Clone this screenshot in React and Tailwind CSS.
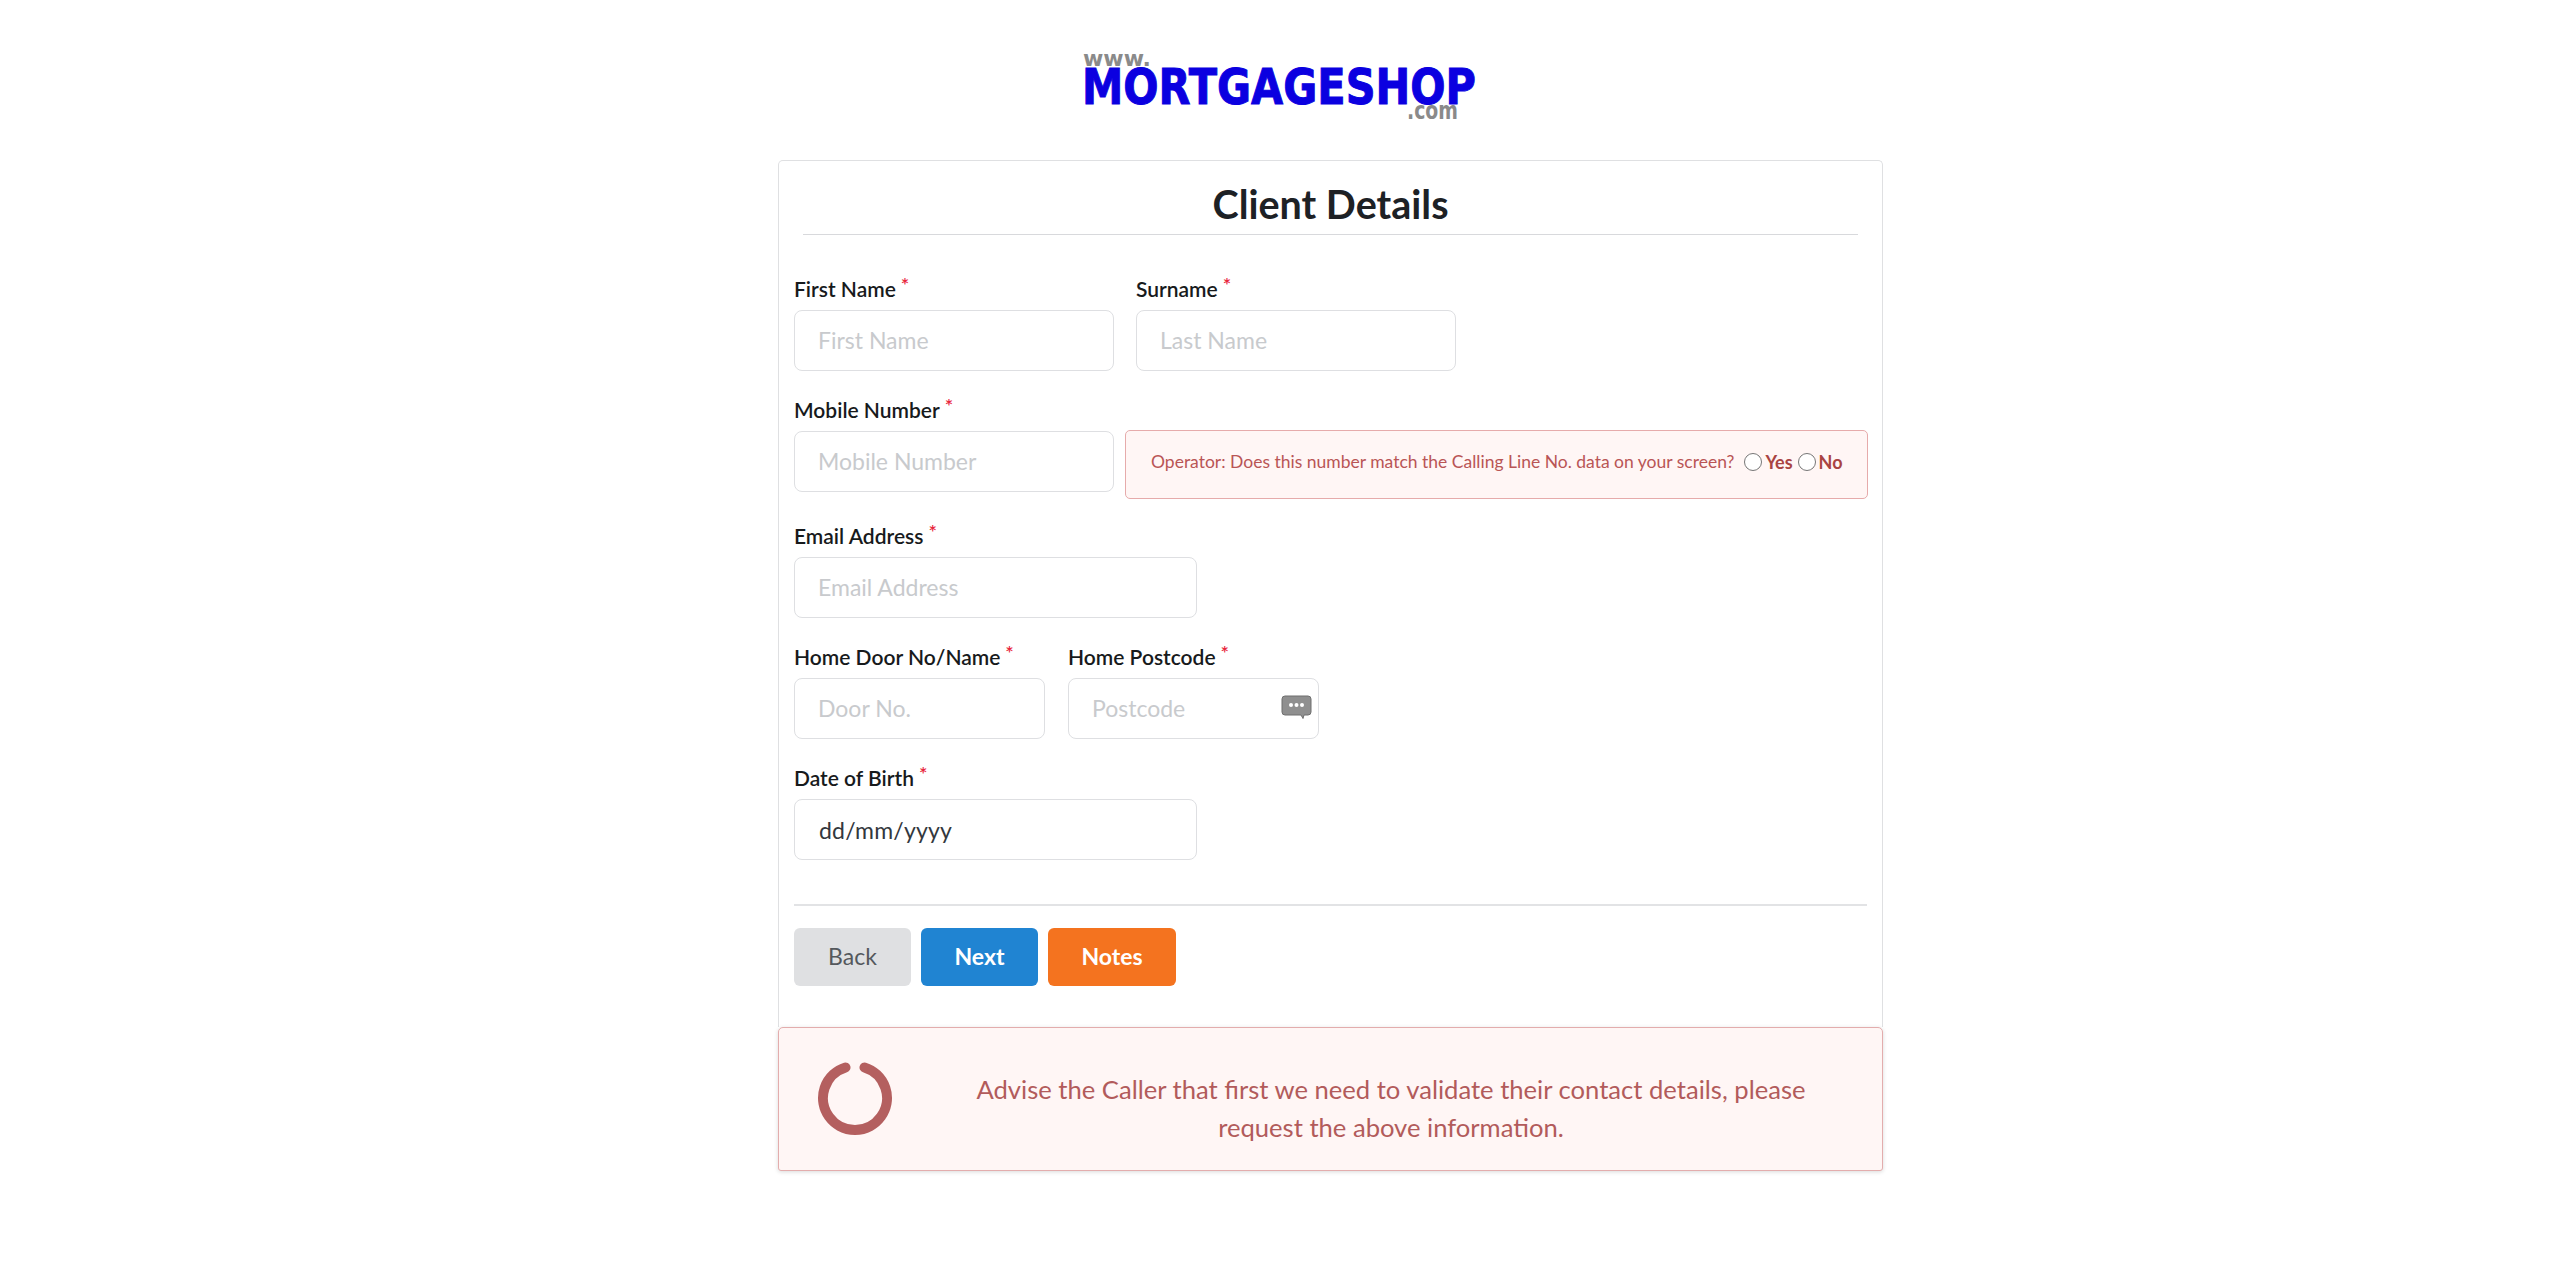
const font = { fontFamily: "Lato, 'Open Sans', sans-serif" };

function Label({ children }) {
  return (
    <label className="flex h-[23px] items-center pt-[1px] text-[21px] font-semibold leading-[23px] text-[#171a1c]">
      {children}
      <span className="ml-[5px] -mt-[9px] text-[20px] leading-none text-[#e8263c]">*</span>
    </label>
  );
}

function Field({ label, placeholder, width, icon }) {
  return (
    <div className={`flex shrink-0 flex-col gap-[11px] ${width}`}>
      <Label>{label}</Label>
      <div className="relative">
        <input
          readOnly
          placeholder={placeholder}
          className="h-[61px] w-full rounded-[8px] border border-[#dedfe2] bg-white px-[23px] pb-[2px] text-[23px] text-[#333] outline-none placeholder:text-[#c8cacd]"
        />
        {icon}
      </div>
    </div>
  );
}

function Bubble() {
  return (
    <svg className="absolute right-[7px] top-[17px]" width="31" height="24" viewBox="0 0 31 24">
      <path d="M4 1h23a3 3 0 0 1 3 3v13a3 3 0 0 1-3 3h-4l-1 3.500-2-3.500H4a3 3 0 0 1-3-3V4a3 3 0 0 1 3-3z" fill="#8f8f8f" stroke="#6f6f6f" strokeWidth="1" />
      <circle cx="10" cy="10" r="2" fill="#fff" />
      <circle cx="15.500" cy="10" r="2" fill="#fff" />
      <circle cx="21" cy="10" r="2" fill="#fff" />
    </svg>
  );
}

function Radio() {
  return <span className="inline-block h-[18px] w-[18px] rounded-full border border-[#767676] bg-white" />;
}

export default function App() {
  return (
    <div className="min-h-[1279px] bg-white pt-[50px]" style={font}>
      <div className="flex h-[110px] justify-center">
        <svg width="390" height="75" viewBox="0 0 390 75" className="block overflow-visible">
          <text x="-2" y="16" fontFamily="'DejaVu Sans', sans-serif" fontWeight="700" fontSize="22" fill="#8a8a8a" textLength="68" lengthAdjust="spacingAndGlyphs">www.</text>
          <text x="-3" y="54" fontFamily="'DejaVu Sans', sans-serif" fontWeight="700" fontSize="50" fill="#0b00e0" stroke="#0b00e0" strokeWidth="1" textLength="394" lengthAdjust="spacingAndGlyphs">MORTGAGESHOP</text>
          <text x="322" y="69" fontFamily="'DejaVu Sans', sans-serif" fontWeight="700" fontSize="24" fill="#8a8a8a" textLength="51" lengthAdjust="spacingAndGlyphs">.com</text>
        </svg>
      </div>

      <div className="ml-[778px] w-[1105px]">
        <div className="rounded-t-[5px] border border-b-0 border-[#dfe0e2] px-[15px] pb-[41px]">
          <div className="mx-[9px] border-b border-[#d8d9dc]">
            <h1 className="h-[73px] pt-[17px] text-center text-[39.500px] font-bold leading-[52px] text-[#1d2125]">Client Details</h1>
          </div>

          <div className="mt-[41px] flex flex-col gap-[26px]">
            <div className="flex gap-[22px]">
              <Field label="First Name" placeholder="First Name" width="w-[320px]" />
              <Field label="Surname" placeholder="Last Name" width="w-[320px]" />
            </div>

            <div className="flex items-end gap-[11px]">
              <Field label="Mobile Number" placeholder="Mobile Number" width="w-[320px]" />
              <div className="mb-[-7px] flex h-[69px] w-[743px] shrink-0 items-center rounded-[5px] border border-[#e6abab] bg-[#fff6f5] pb-[5px] pl-[25px] text-[17.500px] text-[#b95555]">
                <span>Operator: Does this number match the Calling Line No. data on your screen?</span>
                <span className="ml-[10px] flex items-center gap-[3px]"><Radio /><b className="text-[18px] font-bold text-[#a94442]">Yes</b></span>
                <span className="ml-[5px] flex items-center gap-[3px]"><Radio /><b className="text-[18px] font-bold text-[#a94442]">No</b></span>
              </div>
            </div>

            <div className="mt-[5px]">
              <Field label="Email Address" placeholder="Email Address" width="w-[403px]" />
            </div>

            <div className="flex gap-[23px]">
              <Field label="Home Door No/Name" placeholder="Door No." width="w-[251px]" />
              <Field label="Home Postcode" placeholder="Postcode" width="w-[251px]" icon={<Bubble />} />
            </div>

            <div className="flex w-[403px] flex-col gap-[11px]">
              <Label>Date of Birth</Label>
              <div className="flex h-[61px] items-center rounded-[8px] border border-[#dedfe2] px-[24px] pt-[2px] text-[23px] tracking-[0.2px] text-[#33383d]">dd/mm/yyyy</div>
            </div>
          </div>

          <div className="mt-[44px] border-t-2 border-[#e2e3e5] pt-[22px]">
            <div className="flex gap-[10px]">
              <button className="h-[58px] w-[117px] rounded-[6px] bg-[#dfe0e2] pb-[2px] text-[23px] text-[#54585c]">Back</button>
              <button className="h-[58px] w-[117px] rounded-[6px] bg-[#2084d2] pb-[2px] text-[23px] font-bold text-white">Next</button>
              <button className="h-[58px] w-[128px] rounded-[6px] bg-[#f4731f] pb-[2px] text-[23px] font-bold text-white">Notes</button>
            </div>
          </div>
        </div>

        <div className="flex h-[144px] items-center rounded-b-[3px] rounded-t-[5px] border border-[#e3adad] bg-[#fff6f5] shadow-[0_1px_4px_rgba(0,0,0,0.15)]">
          <div className="flex w-[155px] justify-center pb-[2px] pr-[4px]">
            <svg width="76" height="76" viewBox="0 0 76 76" fill="none">
              <path d="M28.500 7.400A32 32 0 1 0 47.500 7.400" stroke="#b45f5f" strokeWidth="10" strokeLinecap="round" />
            </svg>
          </div>
          <p className="ml-[17px] w-[880px] pt-[19px] text-center text-[25.600px] leading-[37.500px] text-[#b25b5b]">
            Advise the Caller that first we need to validate their contact details, please request the above information.
          </p>
        </div>
      </div>
    </div>
  );
}
